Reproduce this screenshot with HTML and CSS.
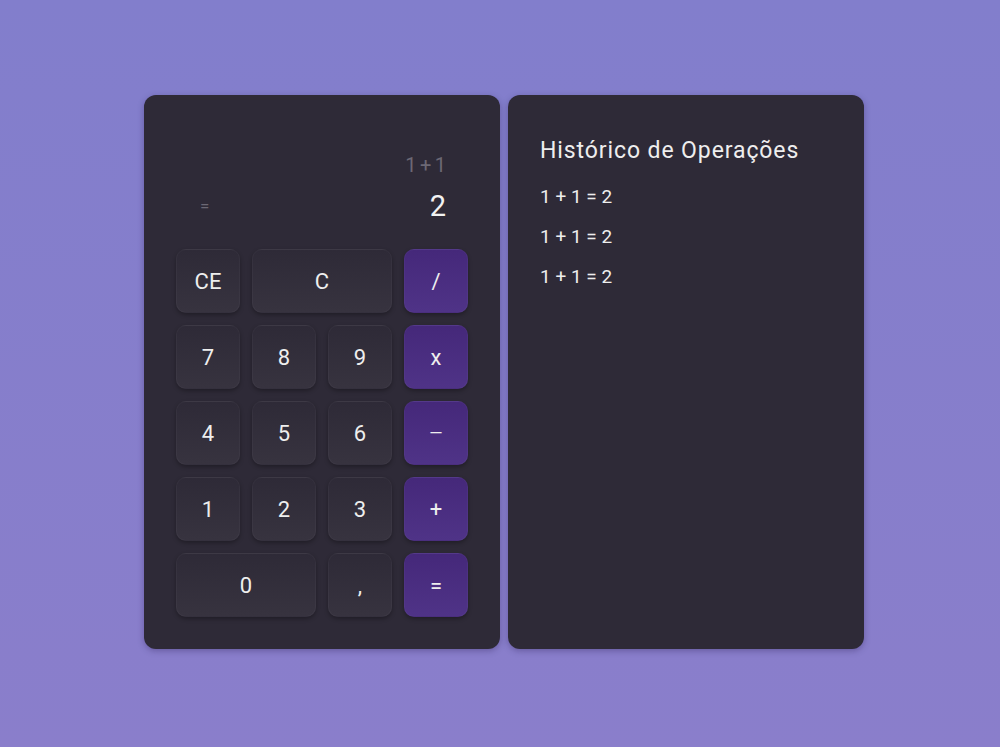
FILE: index.html
```html
<!DOCTYPE html>
<html lang="pt">
<head>
<meta charset="utf-8">
<title>Calculadora</title>
<link rel="stylesheet" href="styles.css">
</head>
<body>
<main class="app">
  <section class="calc">
    <div class="display">
      <div class="expr">1 + 1</div>
      <div class="result-row">
        <span class="eq">=</span>
        <span class="result">2</span>
      </div>
    </div>
    <div class="keys">
      <button class="key">CE</button>
      <button class="key wide">C</button>
      <button class="key op">/</button>
      <button class="key">7</button>
      <button class="key">8</button>
      <button class="key">9</button>
      <button class="key op">x</button>
      <button class="key">4</button>
      <button class="key">5</button>
      <button class="key">6</button>
      <button class="key op minus">—</button>
      <button class="key">1</button>
      <button class="key">2</button>
      <button class="key">3</button>
      <button class="key op">+</button>
      <button class="key wide">0</button>
      <button class="key">,</button>
      <button class="key op">=</button>
    </div>
  </section>
  <section class="history">
    <h2 class="history-title">Histórico de Operações</h2>
    <ul class="history-list">
      <li>1 + 1 = 2</li>
      <li>1 + 1 = 2</li>
      <li>1 + 1 = 2</li>
    </ul>
  </section>
</main>
</body>
</html>
```
FILE: styles.css
```css
* { box-sizing: border-box; }
html, body { margin: 0; height: 100%; }
body {
  background: linear-gradient(180deg, #827ecc 0%, #8a7ecb 100%);
  font-family: Roboto, "Liberation Sans", sans-serif;
  color: #eeeeee;
}
.app {
  display: flex;
  justify-content: center;
  gap: 8px;
  padding: 95px 0 0 8px;
}
.calc, .history {
  width: 356px;
  height: 554px;
  background: #2e2a37;
  border-radius: 12px;
  box-shadow: 0 2px 6px rgba(40, 30, 80, 0.35);
}
.calc {
  padding: 32px;
  display: flex;
  flex-direction: column;
  gap: 12px;
}
.display {
  flex: 1;
  display: flex;
  flex-direction: column;
  justify-content: flex-end;
  padding: 0 22px 15px 24px;
}
.expr {
  text-align: right;
  color: #6c6874;
  font-size: 20px;
  line-height: 24px;
  margin-bottom: 13px;
  word-spacing: -1.5px;
}
.result-row {
  display: flex;
  justify-content: space-between;
  align-items: center;
  line-height: 32px;
}
.eq { color: #6c6874; font-size: 17px; }
.result { font-size: 29px; color: #f2f2f2; }
.keys {
  display: grid;
  grid-template-columns: repeat(4, 64px);
  grid-auto-rows: 64px;
  gap: 12px;
}
.key {
  border: 1px solid rgba(255,255,255,0.03);
  border-radius: 10px;
  background: linear-gradient(180deg, #2e2a37 0%, #37333f 100%);
  box-shadow: 0 2px 4px rgba(0,0,0,0.3);
  color: #eeeeee;
  font-family: Roboto, "Liberation Sans", sans-serif;
  font-size: 22px;
  padding: 0;
}
.key.wide { grid-column: span 2; }
.key.op {
  background: linear-gradient(180deg, #45287a 0%, #4f3387 100%);
}
.key.minus { font-size: 17px; }
.history {
  padding: 40px 32px;
}
.history-title {
  margin: 0 0 18px;
  font-size: 23px;
  font-weight: 400;
  letter-spacing: 0.9px;
  line-height: 32px;
  color: #eeeeee;
}
.history-list {
  list-style: none;
  margin: 0;
  padding: 0;
  display: flex;
  flex-direction: column;
  gap: 16px;
}
.history-list li {
  font-size: 19px;
  line-height: 24px;
}
```
